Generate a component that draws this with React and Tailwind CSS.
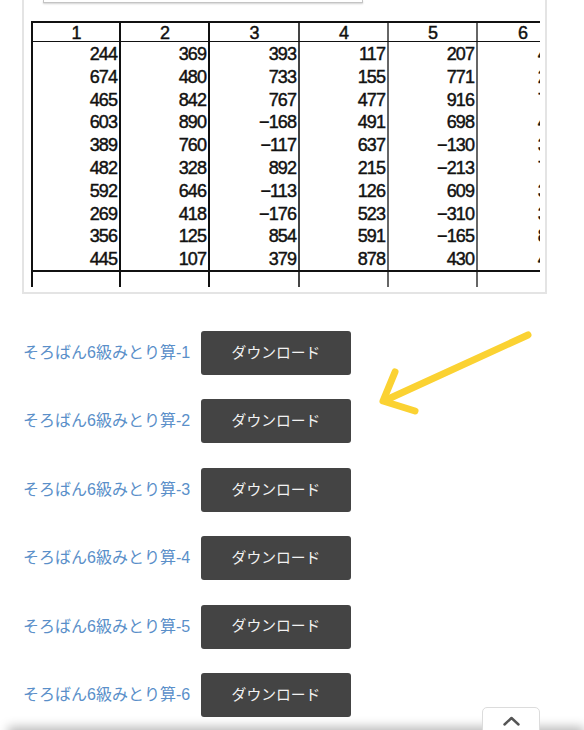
import React from "react";

const data = [
  [244, 369, 393, 117, 207, 412],
  [674, 480, 733, 155, 771, 258],
  [465, 842, 767, 477, 916, 736],
  [603, 890, -168, 491, 698, 447],
  [389, 760, -117, 637, -130, 359],
  [482, 328, 892, 215, -213, 781],
  [592, 646, -113, 126, 609, 324],
  [269, 418, -176, 523, -310, 367],
  [356, 125, 854, 591, -165, 845],
  [445, 107, 379, 878, 430, 463],
];

const colCls = [
  "w-[88px] shrink-0 border-r-2 border-[#111]",
  "w-[89px] shrink-0 border-r-2 border-[#111]",
  "w-[90px] shrink-0 border-r-2 border-[#444]",
  "w-[89px] shrink-0 border-r-2 border-[#666]",
  "w-[89px] shrink-0 border-r-2 border-[#666]",
  "w-[89px] shrink-0",
];

const fmt = (n) => (n < 0 ? "\u2212" + Math.abs(n) : String(n));

function Table() {
  return (
    <div className="ml-[7px] mt-[18px] w-[509px] overflow-hidden">
      <div className="w-[536px] border-l-2 border-[#111] text-[18px] tracking-[-0.9px] text-[#111] [font-family:'Liberation_Sans',Arial,sans-serif] [-webkit-text-stroke:0.45px_#111]">
        <div className="flex h-[21px] border-t-2 border-b border-[#111]">
          {colCls.map((c, i) => (
            <div key={i} className={c + " text-center leading-[18px] pt-[1px]"}>
              {i + 1}
            </div>
          ))}
        </div>
        {data.map((r, ri) => (
          <div key={ri} className="flex h-[22.8px]">
            {r.map((v, ci) => (
              <div
                key={ci}
                className={colCls[ci] + " text-right pr-[2px] leading-[24px]"}
              >
                {fmt(v)}
              </div>
            ))}
          </div>
        ))}
        <div className="flex h-[17px] border-t-2 border-[#111]">
          {colCls.map((c, i) => (
            <div key={i} className={c} />
          ))}
        </div>
      </div>
    </div>
  );
}

export default function App() {
  const items = [1, 2, 3, 4, 5, 6];
  return (
    <div className="relative w-[584px] h-[730px] overflow-hidden bg-white [font-family:'Liberation_Sans','Noto_Sans_CJK_JP',sans-serif]">
      <div className="ml-[22px] w-[525px] h-[294px] border-x-2 border-b-2 border-[#e4e4e4]">
        <div className="ml-[19px] w-[320px] h-[3px] border-x border-b border-[#c4c4c4] shadow-[0_1px_2px_rgba(0,0,0,0.18)]" />
        <Table />
      </div>

      <div className="pl-[23px] pt-[37px] flex flex-col gap-[24.4px]">
        {items.map((n) => (
          <div key={n} className="flex items-center">
            <span className="w-[178px] shrink-0 text-[16px] text-[#5a8fc9] whitespace-nowrap">
              そろばん6級みとり算-{n}
            </span>
            <div className="w-[150px] h-[44px] rounded-[3px] bg-[#444444] flex items-center justify-center text-[14.8px] text-[#f2f2f2]">
              ダウンロード
            </div>
          </div>
        ))}
      </div>

      <svg
        className="absolute left-[375px] top-[328px]"
        width="160"
        height="90"
        viewBox="0 0 160 90"
        fill="none"
      >
        <path
          d="M153 7 L11 72"
          stroke="#fbd232"
          strokeWidth="7"
          strokeLinecap="round"
        />
        <path
          d="M20 44 L8 73 L40 83"
          stroke="#fbd232"
          strokeWidth="7"
          strokeLinecap="round"
          strokeLinejoin="round"
        />
      </svg>

      <div className="absolute left-[8px] right-0 top-[730px] h-[40px] bg-white shadow-[0_-3px_10px_rgba(0,0,0,0.28)]" />

      <div className="absolute left-[482px] top-[707px] w-[58px] h-[30px] bg-white border border-[#dcdcdc] rounded-t-[5px]">
        <svg
          className="absolute left-0 top-0"
          width="58"
          height="24"
          viewBox="0 0 58 24"
          fill="none"
        >
          <path
            d="M21.5 16.5 L28.5 10 L35.5 16.5"
            stroke="#555"
            strokeWidth="2.4"
            strokeLinecap="round"
            strokeLinejoin="round"
          />
        </svg>
      </div>
    </div>
  );
}
